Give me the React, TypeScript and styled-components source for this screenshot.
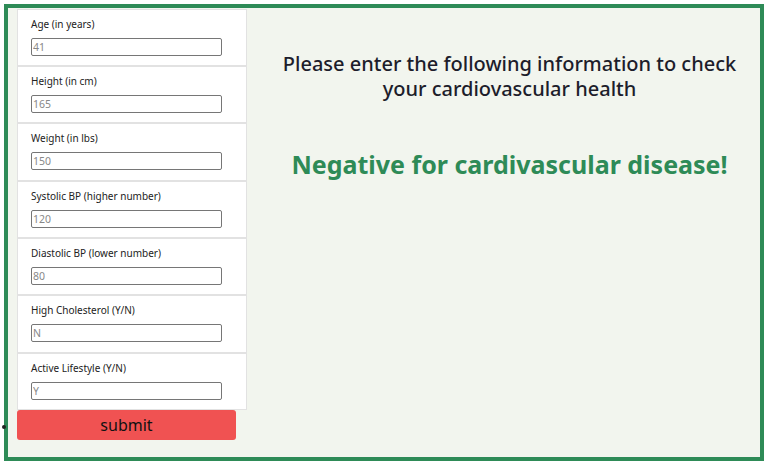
import styled, { createGlobalStyle } from 'styled-components';

const GlobalStyle = createGlobalStyle`
  html, body {
    margin: 0;
    padding: 0;
    background: #ffffff;
  }
  body {
    font-family: 'Noto Sans', 'Open Sans', sans-serif;
  }
`;

const Frame = styled.div`
  margin: 4px 2px 4px 4px;
  height: 449px;
  border: 4px solid #2e8b57;
  background: #f2f5ee;
  display: flex;
`;

const FormColumn = styled.ul`
  margin: 0;
  padding: 0 0 0 9px;
  width: 230px;
  list-style: none;
  display: flex;
  flex-direction: column;
`;

const Card = styled.li`
  margin-top: 0.5px;
  background: #ffffff;
  display: flex;
  flex-direction: column;
`;

const Field = styled.div`
  border: 1px solid #e2e2e2;
  padding: 7px 13px 9.4px;
  display: flex;
  flex-direction: column;
  gap: 6px;
`;

const Label = styled.label`
  font-size: 10px;
  line-height: 15px;
  color: #222;
`;

const Input = styled.input`
  box-sizing: border-box;
  width: 191px;
  height: 18px;
  margin: 0;
  padding: 0 1px;
  border: 1px solid #767676;
  border-radius: 2px;
  background: #fff;
  font-family: 'Noto Sans', sans-serif;
  font-size: 10.5px;
  color: #777;
  &::placeholder {
    color: #888;
  }
`;

const SubmitItem = styled.li`
  display: list-item;
  list-style: disc outside;
  font-size: 11px;
  &::marker {
    color: #222;
  }
`;

const SubmitButton = styled.button`
  width: 219px;
  height: 30px;
  border: none;
  border-radius: 3px;
  background: #f05252;
  color: #111;
  font-family: 'Noto Sans', sans-serif;
  font-size: 16px;
  cursor: pointer;
  display: block;
`;

const Result = styled.div`
  flex: 1;
  padding: 43px 0 0 12px;
  text-align: center;
`;

const Prompt = styled.h2`
  margin: 0;
  font-size: 20px;
  line-height: 25px;
  font-weight: 500;
  color: #1d1d2b;
`;

const Verdict = styled.h1`
  margin: 46px 0 0;
  font-size: 25px;
  line-height: 34px;
  font-weight: 700;
  color: #2e8b57;
`;

const fields = [
  { label: 'Age (in years)', value: '41' },
  { label: 'Height (in cm)', value: '165' },
  { label: 'Weight (in lbs)', value: '150' },
  { label: 'Systolic BP (higher number)', value: '120' },
  { label: 'Diastolic BP (lower number)', value: '80' },
  { label: 'High Cholesterol (Y/N)', value: 'N' },
  { label: 'Active Lifestyle (Y/N)', value: 'Y' },
];

export default function App() {
  return (
    <>
      <GlobalStyle />
      <Frame>
        <FormColumn>
          <Card>
            {fields.map((f) => (
              <Field key={f.label}>
                <Label>{f.label}</Label>
                <Input placeholder={f.value} />
              </Field>
            ))}
          </Card>
          <SubmitItem>
            <SubmitButton>submit</SubmitButton>
          </SubmitItem>
        </FormColumn>
        <Result>
          <Prompt>Please enter the following information to check your cardiovascular health</Prompt>
          <Verdict>Negative for cardivascular disease!</Verdict>
        </Result>
      </Frame>
    </>
  );
}
